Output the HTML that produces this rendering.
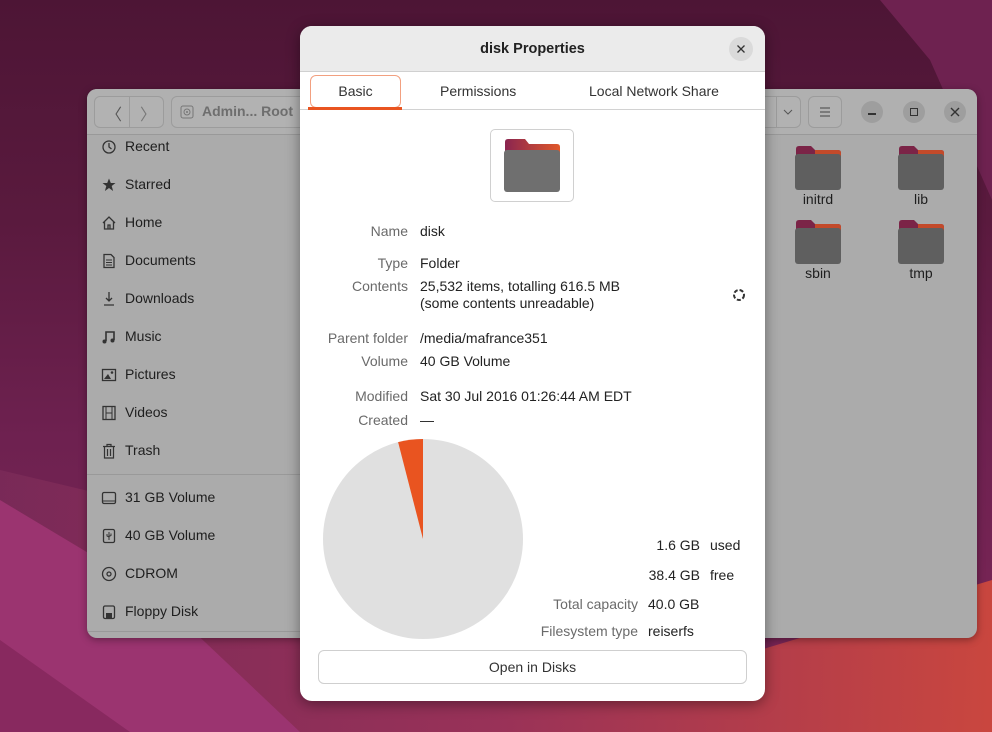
<!DOCTYPE html>
<html><head><meta charset="utf-8"><style>
*{margin:0;padding:0;box-sizing:border-box}
body{width:992px;height:732px;overflow:hidden;position:relative;font-family:"Liberation Sans",sans-serif;font-size:14px;
background:linear-gradient(180deg,#4d1535 0%,#5a1a3e 30%,#6e2150 60%,#7d2758 100%);}
.a{position:absolute}
.fm{left:87px;top:89px;width:890px;height:549px;background:#ababab;border-radius:10px;overflow:hidden;box-shadow:0 2px 8px rgba(0,0,0,.35)}
.fmh{left:0;top:0;width:890px;height:46px;background:#b0b0b0;border-bottom:1px solid #999}
.btn{position:absolute;border:1px solid #9c9c9c;border-radius:6px;background:#b2b2b2}
.si{position:absolute;left:14px;font-size:14px;color:#1e1e1e;white-space:nowrap}
.si svg{position:absolute;left:0;top:1px}
.si span{position:absolute;left:24px;top:0}
.dlg{left:300px;top:26px;width:465px;height:675px;background:#fff;border-radius:12px;overflow:hidden;box-shadow:0 3px 14px rgba(0,0,0,.4)}
.lab{position:absolute;right:357px;color:#6a6a6a;text-align:right;white-space:nowrap}
.val{position:absolute;left:120px;color:#222;white-space:nowrap}
.fl{position:absolute;font-size:14px;color:#1e1e1e;text-align:center;width:60px}
</style></head><body>
<svg class="a" style="left:0;top:0" width="992" height="732">
<defs>
<linearGradient id="gr" x1="0" y1="0" x2="1" y2="0"><stop offset="0" stop-color="#7a2a58"/><stop offset="0.5" stop-color="#9c3358"/><stop offset="1" stop-color="#d24a3c"/></linearGradient>
</defs>
<polygon points="880,0 992,0 992,200 930,60" fill="#6e2250"/>
<polygon points="0,470 0,732 992,732 992,580 760,650" fill="url(#gr)" opacity="0.9"/>
<polygon points="0,500 0,732 300,732 150,590" fill="#9b3470"/>
<polygon points="0,640 0,732 130,732" fill="#88295f"/>
</svg>

<div class="a fm">
 <div class="a fmh"></div>
 <div class="btn" style="left:7px;top:7px;width:70px;height:32px"></div>
 <div class="a" style="left:42px;top:7px;width:1px;height:32px;background:#9c9c9c"></div>
 <div class="a" style="left:19px;top:12px;color:#555;font-size:16px">〈</div>
 <div class="a" style="left:53px;top:12px;color:#777;font-size:16px">〉</div>
 <div class="btn" style="left:84px;top:7px;width:240px;height:32px"></div>
 <svg class="a" style="left:93px;top:16px" width="14" height="14"><rect x="1" y="1" width="12" height="12" rx="2" fill="none" stroke="#777"/><circle cx="7" cy="7" r="3" fill="none" stroke="#777"/><circle cx="7" cy="7" r="1" fill="#777"/></svg>
 <div class="a" style="left:115px;top:14px;font-weight:bold;color:#6e6e6e;font-size:14px">Admin... Root</div>
 <div class="btn" style="left:668px;top:7px;width:46px;height:32px"></div>
 <div class="a" style="left:689px;top:7px;width:1px;height:32px;background:#9c9c9c"></div>
 <svg class="a" style="left:696px;top:19px" width="10" height="8"><path d="M1 2 L5 6 L9 2" fill="none" stroke="#555"/></svg>
 <div class="btn" style="left:721px;top:7px;width:34px;height:32px"></div>
 <svg class="a" style="left:732px;top:17px" width="12" height="12"><path d="M1 2H11M1 6H11M1 10H11" stroke="#444"/></svg>
 <div class="a" style="left:774px;top:12px;width:22px;height:22px;border-radius:50%;background:#9e9e9e"></div>
 <div class="a" style="left:781px;top:24px;width:8px;height:1.5px;background:#333"></div>
 <div class="a" style="left:816px;top:12px;width:22px;height:22px;border-radius:50%;background:#9e9e9e"></div>
 <div class="a" style="left:823px;top:19px;width:8px;height:8px;border:1.5px solid #333"></div>
 <div class="a" style="left:857px;top:12px;width:22px;height:22px;border-radius:50%;background:#9e9e9e"></div>
 <svg class="a" style="left:863px;top:18px" width="10" height="10"><path d="M1 1L9 9M9 1L1 9" stroke="#333" stroke-width="1.4"/></svg>

 <div class="si" style="top:49px"><svg width="16" height="16"><circle cx="8" cy="8" r="6" fill="none" stroke="#333" stroke-width="1.3"/><path d="M8 4V8L10.5 10" stroke="#333" fill="none" stroke-width="1.3"/></svg><span>Recent</span></div>
 <div class="si" style="top:87px"><svg width="16" height="16"><path d="M8 1.5L9.8 6H14.5L10.7 9L12.1 14L8 11L3.9 14L5.3 9L1.5 6H6.2Z" fill="#333"/></svg><span>Starred</span></div>
 <div class="si" style="top:125px"><svg width="16" height="16"><path d="M2 8L8 2L14 8M3.5 7V14H12.5V7M7 14V10H9V14" fill="none" stroke="#333" stroke-width="1.3"/></svg><span>Home</span></div>
 <div class="si" style="top:163px"><svg width="16" height="16"><path d="M3 1.5H10L13 4.5V14.5H3Z" fill="none" stroke="#333" stroke-width="1.3"/><path d="M5 7H11M5 9.5H11M5 12H11" stroke="#333"/></svg><span>Documents</span></div>
 <div class="si" style="top:201px"><svg width="16" height="16"><path d="M8 1V10M5 7L8 10L11 7M3 14H13" fill="none" stroke="#333" stroke-width="1.3"/></svg><span>Downloads</span></div>
 <div class="si" style="top:239px"><svg width="16" height="16"><path d="M5 12V3H13V11" fill="none" stroke="#333" stroke-width="1.6"/><circle cx="3.5" cy="12.5" r="2" fill="#333"/><circle cx="11.5" cy="11.5" r="2" fill="#333"/></svg><span>Music</span></div>
 <div class="si" style="top:277px"><svg width="16" height="16"><rect x="1.5" y="2.5" width="13" height="11" fill="none" stroke="#333" stroke-width="1.3"/><path d="M3 12L7 7L10 12Z" fill="#333"/><circle cx="11" cy="5.5" r="1.3" fill="#333"/></svg><span>Pictures</span></div>
 <div class="si" style="top:315px"><svg width="16" height="16"><rect x="2" y="1.5" width="12" height="13" fill="none" stroke="#333" stroke-width="1.3"/><path d="M5 1.5V14.5M11 1.5V14.5M5 8H11" stroke="#333"/></svg><span>Videos</span></div>
 <div class="si" style="top:353px"><svg width="16" height="16"><path d="M2 3.5H14M6 3.5V1.5H10V3.5M3.5 4V15H12.5V4M6.5 6V13M9.5 6V13" fill="none" stroke="#333" stroke-width="1.2"/></svg><span>Trash</span></div>
 <div class="a" style="left:0;top:385px;width:420px;height:1px;background:#999"></div>
 <div class="si" style="top:400px"><svg width="16" height="16"><rect x="1.5" y="2.5" width="13" height="11" rx="1.5" fill="none" stroke="#333" stroke-width="1.3"/><path d="M2 11H14" stroke="#333"/></svg><span>31 GB Volume</span></div>
 <div class="si" style="top:438px"><svg width="16" height="16"><rect x="2.5" y="1.5" width="11" height="13" rx="1.5" fill="none" stroke="#333" stroke-width="1.3"/><path d="M8 4V12M6 6V8L8 9M10 5.5V7.5L8 8.5" fill="none" stroke="#333"/></svg><span>40 GB Volume</span></div>
 <div class="si" style="top:476px"><svg width="16" height="16"><circle cx="8" cy="8" r="6.5" fill="none" stroke="#333" stroke-width="1.3"/><circle cx="8" cy="8" r="2" fill="none" stroke="#333" stroke-width="1.3"/></svg><span>CDROM</span></div>
 <div class="si" style="top:514px"><svg width="16" height="16"><rect x="2.5" y="2" width="11" height="12.5" rx="1.5" fill="none" stroke="#333" stroke-width="1.3"/><rect x="5" y="9" width="6" height="5" fill="#333"/></svg><span>Floppy Disk</span></div>
 <div class="a" style="left:0;top:542px;width:420px;height:1px;background:#999"></div>

 <svg class="a" style="left:707px;top:56px" width="48" height="46"><path d="M2 4Q2 1 5 1H17L21 5H44Q47 5 47 8V20H2Z" fill="#7b2447"/><path d="M21 5H44Q47 5 47 8V14H21Z" fill="#c34a2a"/><rect x="1" y="9" width="46" height="36" rx="3" fill="#5f5f5f"/></svg>
 <div class="fl" style="left:701px;top:102px">initrd</div>
 <svg class="a" style="left:810px;top:56px" width="48" height="46"><path d="M2 4Q2 1 5 1H17L21 5H44Q47 5 47 8V20H2Z" fill="#7b2447"/><path d="M21 5H44Q47 5 47 8V14H21Z" fill="#c34a2a"/><rect x="1" y="9" width="46" height="36" rx="3" fill="#5f5f5f"/></svg>
 <div class="fl" style="left:804px;top:102px">lib</div>
 <svg class="a" style="left:707px;top:130px" width="48" height="46"><path d="M2 4Q2 1 5 1H17L21 5H44Q47 5 47 8V20H2Z" fill="#7b2447"/><path d="M21 5H44Q47 5 47 8V14H21Z" fill="#c34a2a"/><rect x="1" y="9" width="46" height="36" rx="3" fill="#5f5f5f"/></svg>
 <div class="fl" style="left:701px;top:176px">sbin</div>
 <svg class="a" style="left:810px;top:130px" width="48" height="46"><path d="M2 4Q2 1 5 1H17L21 5H44Q47 5 47 8V20H2Z" fill="#7b2447"/><path d="M21 5H44Q47 5 47 8V14H21Z" fill="#c34a2a"/><rect x="1" y="9" width="46" height="36" rx="3" fill="#5f5f5f"/></svg>
 <div class="fl" style="left:804px;top:176px">tmp</div>
</div>

<div class="a dlg">
 <div class="a" style="left:0;top:0;width:465px;height:46px;background:#ebebeb;border-bottom:1px solid #d0d0d0"></div>
 <div class="a" style="left:0;top:15px;width:465px;text-align:center;font-weight:bold;font-size:14.5px;color:#222">disk Properties</div>
 <div class="a" style="left:429px;top:11px;width:24px;height:24px;border-radius:50%;background:#dadada"></div>
 <svg class="a" style="left:437px;top:19px" width="8" height="8"><path d="M0.5 0.5L7.5 7.5M7.5 0.5L0.5 7.5" stroke="#333" stroke-width="1.3"/></svg>
 <div class="a" style="left:0;top:83px;width:465px;height:1px;background:#d2d2d2"></div>
 <div class="a" style="left:10px;top:49px;width:91px;height:33px;border:1px solid #f2a080;border-radius:6px"></div>
 <div class="a" style="left:8px;top:81px;width:94px;height:3px;background:#e95420"></div>
 <div class="a" style="left:10px;top:57px;width:91px;text-align:center;color:#333">Basic</div>
 <div class="a" style="left:140px;top:57px;color:#333">Permissions</div>
 <div class="a" style="left:289px;top:57px;color:#333">Local Network Share</div>

 <div class="a" style="left:190px;top:103px;width:84px;height:73px;border:1px solid #d0d0d0;border-radius:5px"></div>
 <svg class="a" style="left:203px;top:112px" width="58" height="56"><defs><linearGradient id="tb" x1="0" x2="1"><stop offset="0" stop-color="#8a2550"/><stop offset="1" stop-color="#e0582a"/></linearGradient></defs><path d="M2 4Q2 1 5 1H22L26 6H54Q57 6 57 9V22H2Z" fill="url(#tb)"/><rect x="1" y="12" width="56" height="42" rx="3" fill="#6f6f6f"/></svg>

 <div class="lab" style="top:197px">Name</div><div class="val" style="top:197px">disk</div>
 <div class="lab" style="top:229px">Type</div><div class="val" style="top:229px">Folder</div>
 <div class="lab" style="top:252px">Contents</div><div class="val" style="top:252px">25,532 items, totalling 616.5 MB</div>
 <div class="val" style="top:269px">(some contents unreadable)</div>
 <svg class="a" style="left:432px;top:262px" width="14" height="14"><circle cx="7" cy="7" r="5" fill="none" stroke="#333" stroke-width="2" stroke-dasharray="4 2"/></svg>
 <div class="lab" style="top:304px">Parent folder</div><div class="val" style="top:304px">/media/mafrance351</div>
 <div class="lab" style="top:327px">Volume</div><div class="val" style="top:327px">40 GB Volume</div>
 <div class="lab" style="top:362px">Modified</div><div class="val" style="top:362px">Sat 30 Jul 2016 01:26:44 AM EDT</div>
 <div class="lab" style="top:386px">Created</div><div class="val" style="top:386px">—</div>

 <svg class="a" style="left:22px;top:412px" width="202" height="202"><circle cx="101" cy="101" r="100" fill="#e0e0e0"/><path d="M101 101L101 1A100 100 0 0 0 76.1 4.1Z" fill="#e95420"/></svg>

 <div class="a" style="right:65px;top:511px;color:#222">1.6 GB</div><div class="a" style="left:410px;top:511px;color:#222">used</div>
 <div class="a" style="right:65px;top:541px;color:#222">38.4 GB</div><div class="a" style="left:410px;top:541px;color:#222">free</div>
 <div class="a" style="right:127px;top:570px;color:#6a6a6a">Total capacity</div><div class="a" style="left:348px;top:570px;color:#222">40.0 GB</div>
 <div class="a" style="right:127px;top:597px;color:#6a6a6a">Filesystem type</div><div class="a" style="left:348px;top:597px;color:#222">reiserfs</div>

 <div class="a" style="left:18px;top:624px;width:429px;height:34px;border:1px solid #cfcfcf;border-radius:6px;text-align:center;line-height:32px;color:#333">Open in Disks</div>
</div>
</body></html>
